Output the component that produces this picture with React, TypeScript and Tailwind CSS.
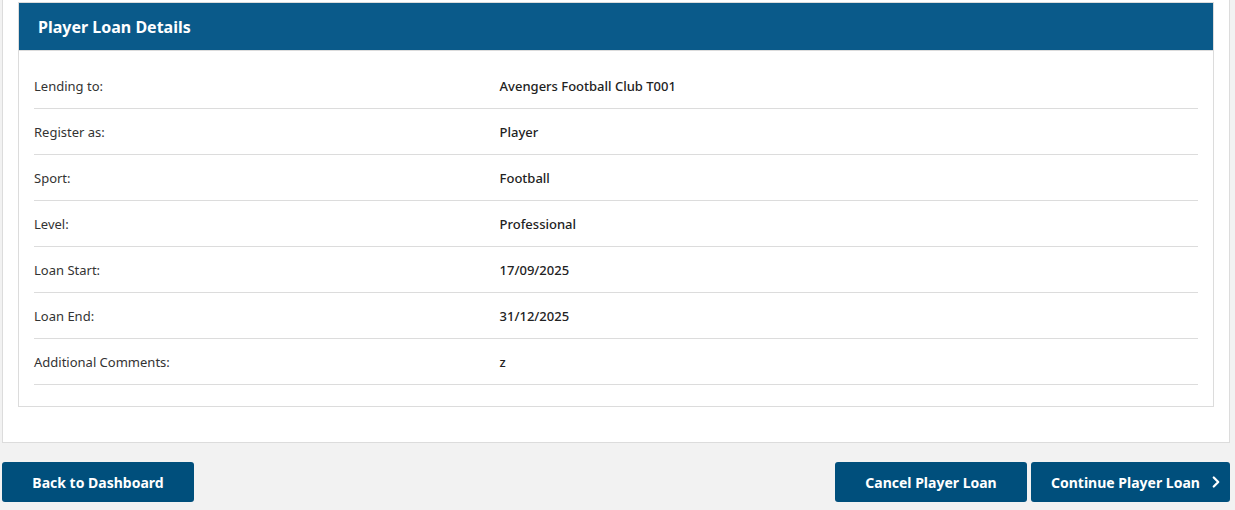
import { ChevronRight } from "lucide-react";

const rows: [string, string][] = [
    ["Lending to:", "Avengers Football Club T001"],
    ["Register as:", "Player"],
    ["Sport:", "Football"],
    ["Level:", "Professional"],
    ["Loan Start:", "17/09/2025"],
    ["Loan End:", "31/12/2025"],
    ["Additional Comments:", "z"],
];

export default function App() {
    return (
        <div
            className="min-h-[510px] bg-[#f2f2f2] pl-[2px] pr-[5px] text-[#333]"
            style={{ fontFamily: '"Noto Sans", "Open Sans", sans-serif' }}
        >
            {/* Outer card */}
            <div className="border-x border-b border-[#dcdcdc] bg-white px-[15px] pt-[2px] pb-[35px]">
                <div className="border border-[#dcdcdc]">
                    <div className="h-[48px] bg-[#0a5a8a] px-[19px] flex items-center border-b border-[#dcdcdc]">
                        <h2 className="text-[16px] font-bold text-white">Player Loan Details</h2>
                    </div>
                    <div className="px-[15px] pt-[12px] pb-[21px]">
                        {rows.map(([label, value]) => (
                            <div
                                key={label}
                                className="flex h-[46px] items-center border-b border-[#dcdcdc] pt-[2px] text-[13px]"
                            >
                                <div className="w-[40%]">{label}</div>
                                <div className="w-[60%] font-medium text-[#222]">{value}</div>
                            </div>
                        ))}
                    </div>
                </div>
            </div>

            {/* Actions */}
            <div className="mt-[19px] flex items-center justify-between">
                <button className="h-[40px] w-[192px] rounded-[3px] bg-[#004f7c] text-[14px] font-bold text-white">
                    Back to Dashboard
                </button>
                <div className="flex gap-[4px]">
                    <button className="h-[40px] w-[192px] rounded-[3px] bg-[#004f7c] text-[14px] font-bold text-white">
                        Cancel Player Loan
                    </button>
                    <button className="flex h-[40px] w-[199px] items-center gap-[7px] rounded-[3px] bg-[#004f7c] pl-[20px] text-[14px] font-bold text-white">
                        Continue Player Loan
                        <ChevronRight size={18} strokeWidth={3} />
                    </button>
                </div>
            </div>
        </div>
    );
}
